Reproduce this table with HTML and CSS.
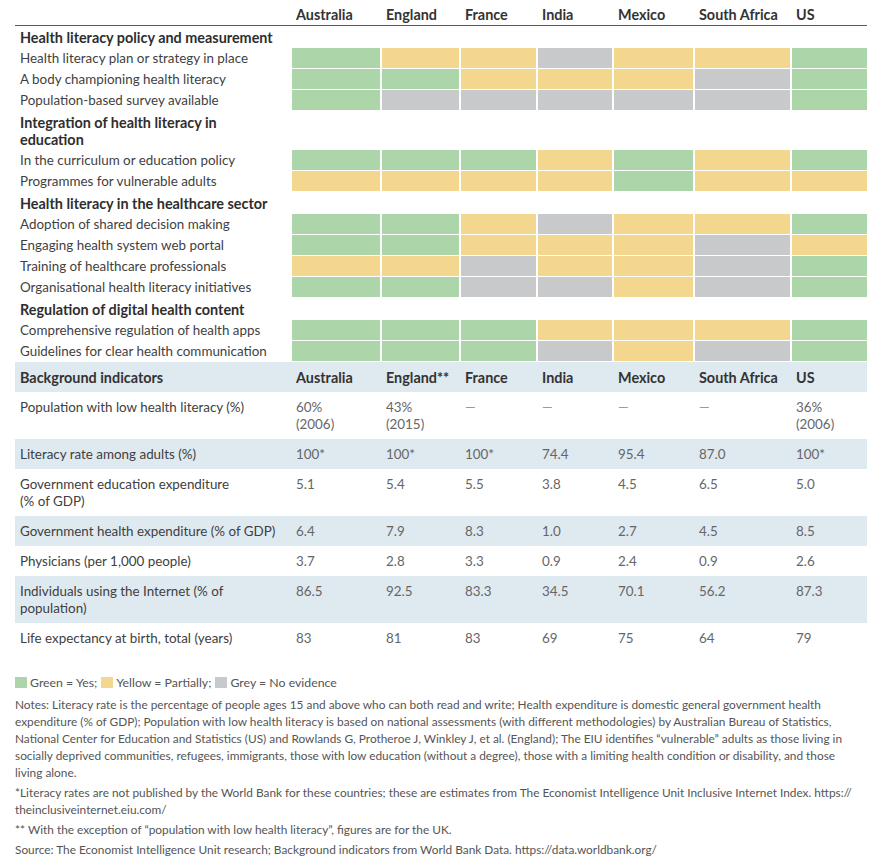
FILE: index.html
```html
<!DOCTYPE html>
<html lang="en">
<head>
<meta charset="utf-8">
<title>Health literacy comparison</title>
<link rel="stylesheet" href="styles.css">
</head>
<body>
<div class="page">
  <table class="grid">
    <colgroup>
      <col class="w-lbl"><col class="w-aus"><col class="w-eng"><col class="w-fra"><col class="w-ind"><col class="w-mex"><col class="w-rsa"><col class="w-us">
    </colgroup>
    <thead>
      <tr class="head">
        <th></th><th>Australia</th><th>England</th><th>France</th><th>India</th><th>Mexico</th><th>South Africa</th><th>US</th>
      </tr>
    </thead>
    <tbody>
      <tr class="sec first"><td class="lbl">Health literacy policy and measurement</td><td colspan="7"></td></tr>
      <tr class="row"><td class="lbl">Health literacy plan or strategy in place</td><td class="c g"></td><td class="c y"></td><td class="c y"></td><td class="c n"></td><td class="c y"></td><td class="c y"></td><td class="c g"></td></tr>
      <tr class="row"><td class="lbl">A body championing health literacy</td><td class="c g"></td><td class="c g"></td><td class="c y"></td><td class="c y"></td><td class="c y"></td><td class="c n"></td><td class="c g"></td></tr>
      <tr class="row"><td class="lbl">Population-based survey available</td><td class="c g"></td><td class="c n"></td><td class="c n"></td><td class="c n"></td><td class="c n"></td><td class="c n"></td><td class="c g"></td></tr>

      <tr class="sec"><td class="lbl">Integration of health literacy in<br>education</td><td colspan="7"></td></tr>
      <tr class="row"><td class="lbl">In the curriculum or education policy</td><td class="c g"></td><td class="c g"></td><td class="c g"></td><td class="c y"></td><td class="c g"></td><td class="c y"></td><td class="c g"></td></tr>
      <tr class="row"><td class="lbl">Programmes for vulnerable adults</td><td class="c y"></td><td class="c y"></td><td class="c y"></td><td class="c y"></td><td class="c g"></td><td class="c y"></td><td class="c y"></td></tr>

      <tr class="sec"><td class="lbl">Health literacy in the healthcare sector</td><td colspan="7"></td></tr>
      <tr class="row"><td class="lbl">Adoption of shared decision making</td><td class="c g"></td><td class="c g"></td><td class="c y"></td><td class="c n"></td><td class="c y"></td><td class="c y"></td><td class="c g"></td></tr>
      <tr class="row"><td class="lbl">Engaging health system web portal</td><td class="c g"></td><td class="c g"></td><td class="c y"></td><td class="c y"></td><td class="c y"></td><td class="c n"></td><td class="c y"></td></tr>
      <tr class="row"><td class="lbl">Training of healthcare professionals</td><td class="c y"></td><td class="c y"></td><td class="c n"></td><td class="c y"></td><td class="c y"></td><td class="c n"></td><td class="c g"></td></tr>
      <tr class="row"><td class="lbl">Organisational health literacy initiatives</td><td class="c g"></td><td class="c g"></td><td class="c n"></td><td class="c n"></td><td class="c y"></td><td class="c n"></td><td class="c g"></td></tr>

      <tr class="sec"><td class="lbl">Regulation of digital health content</td><td colspan="7"></td></tr>
      <tr class="row"><td class="lbl">Comprehensive regulation of health apps</td><td class="c g"></td><td class="c g"></td><td class="c g"></td><td class="c y"></td><td class="c y"></td><td class="c y"></td><td class="c g"></td></tr>
      <tr class="row"><td class="lbl">Guidelines for clear health communication</td><td class="c g"></td><td class="c g"></td><td class="c g"></td><td class="c n"></td><td class="c y"></td><td class="c n"></td><td class="c g"></td></tr>
    </tbody>
    <tbody class="bg">
      <tr class="bhead shade">
        <th class="lbl">Background indicators</th><th>Australia</th><th>England**</th><th>France</th><th>India</th><th>Mexico</th><th>South Africa</th><th>US</th>
      </tr>
      <tr><td class="lbl">Population with low health literacy (%)</td><td>60%<br>(2006)</td><td>43%<br>(2015)</td><td class="dash">—</td><td class="dash">—</td><td class="dash">—</td><td class="dash">—</td><td>36%<br>(2006)</td></tr>
      <tr class="shade"><td class="lbl">Literacy rate among adults (%)</td><td>100*</td><td>100*</td><td>100*</td><td>74.4</td><td>95.4</td><td>87.0</td><td>100*</td></tr>
      <tr><td class="lbl">Government education expenditure<br>(% of GDP)</td><td>5.1</td><td>5.4</td><td>5.5</td><td>3.8</td><td>4.5</td><td>6.5</td><td>5.0</td></tr>
      <tr class="shade"><td class="lbl">Government health expenditure (% of GDP)</td><td>6.4</td><td>7.9</td><td>8.3</td><td>1.0</td><td>2.7</td><td>4.5</td><td>8.5</td></tr>
      <tr><td class="lbl">Physicians (per 1,000 people)</td><td>3.7</td><td>2.8</td><td>3.3</td><td>0.9</td><td>2.4</td><td>0.9</td><td>2.6</td></tr>
      <tr class="shade"><td class="lbl">Individuals using the Internet (% of<br>population)</td><td>86.5</td><td>92.5</td><td>83.3</td><td>34.5</td><td>70.1</td><td>56.2</td><td>87.3</td></tr>
      <tr><td class="lbl">Life expectancy at birth, total (years)</td><td>83</td><td>81</td><td>83</td><td>69</td><td>75</td><td>64</td><td>79</td></tr>
    </tbody>
  </table>

  <div class="legend">
    <span class="key"><span class="sw g"></span>Green = Yes;</span>
    <span class="key"><span class="sw y"></span>Yellow = Partially;</span>
    <span class="key"><span class="sw n"></span>Grey = No evidence</span>
  </div>

  <div class="notes">
    <p>Notes: Literacy rate is the percentage of people ages 15 and above who can both read and write; Health expenditure is domestic general government health<br>expenditure (% of GDP); Population with low health literacy is based on national assessments (with different methodologies) by Australian Bureau of Statistics,<br>National Center for Education and Statistics (US) and Rowlands G, Protheroe J, Winkley J, et al. (England); The EIU identifies “vulnerable” adults as those living in<br>socially deprived communities, refugees, immigrants, those with low education (without a degree), those with a limiting health condition or disability, and those<br>living alone.</p>
    <p>*Literacy rates are not published by the World Bank for these countries; these are estimates from The Economist Intelligence Unit Inclusive Internet Index. https://<br>theinclusiveinternet.eiu.com/</p>
    <p>** With the exception of “population with low health literacy”, figures are for the UK.</p>
    <p>Source: The Economist Intelligence Unit research; Background indicators from World Bank Data. https://data.worldbank.org/</p>
  </div>
</div>
</body>
</html>
```
FILE: styles.css
```css
* { box-sizing: border-box; }
html, body { margin: 0; padding: 0; background: #fff; }
body {
  font-family: Lato, "Open Sans", "DejaVu Sans", sans-serif;
  font-size: 13.4px;
  line-height: 17px;
  color: #3f3f3f;
}
.page { padding: 0 10px 0 15px; }

.grid {
  border-collapse: separate;
  border-spacing: 0;
  table-layout: fixed;
  width: 852px;
}
.w-lbl { width: 277px; }
.w-aus { width: 90px; }
.w-eng { width: 79px; }
.w-fra { width: 77px; }
.w-ind { width: 76px; }
.w-mex { width: 81px; }
.w-rsa { width: 97px; }
.w-us  { width: 75px; }

.grid th, .grid td {
  padding: 0 4px;
  text-align: left;
  vertical-align: top;
}
.grid th {
  font-weight: 700;
  color: #333;
  font-size: 14.4px;
}

.head th {
  padding-top: 6px;
  padding-bottom: 2px;
  border-bottom: 1px solid #5a5a5a;
}

.grid .lbl { padding-left: 5px; padding-right: 4px; }

.sec td { padding-top: 3px; padding-bottom: 2px; }
.sec .lbl {
  font-weight: 700;
  color: #2e2e2e;
  font-size: 14.4px;
}

.row td { padding-top: 2px; padding-bottom: 2px; }
.row td.c { border-right: 2px solid #fff; border-bottom: 1px solid #fff; padding: 0; }
.row td.c:last-child { border-right: 0; }
.c.g, .sw.g { background: #acd5aa; }
.c.y, .sw.y { background: #f3d78f; }
.c.n, .sw.n { background: #c8c9cb; }

.bg td, .bg th { padding-top: 7px; padding-bottom: 6px; }
.bg td { color: #666; }
.bg td.lbl { color: #404040; }
.bg td.dash { color: #9a9a9a; }
.shade td, .shade th { background: #dfe9f0; }

.legend {
  margin-top: 21px;
  color: #555;
  font-size: 12.3px;
  display: flex;
  gap: 4px;
}
.key { display: inline-flex; align-items: center; }
.sw {
  display: inline-block;
  width: 12px;
  height: 11px;
  margin-right: 3px;
}

.notes { margin-top: 5px; color: #555; font-size: 11.85px; }
.notes p { margin: 0 0 3px; }
```
